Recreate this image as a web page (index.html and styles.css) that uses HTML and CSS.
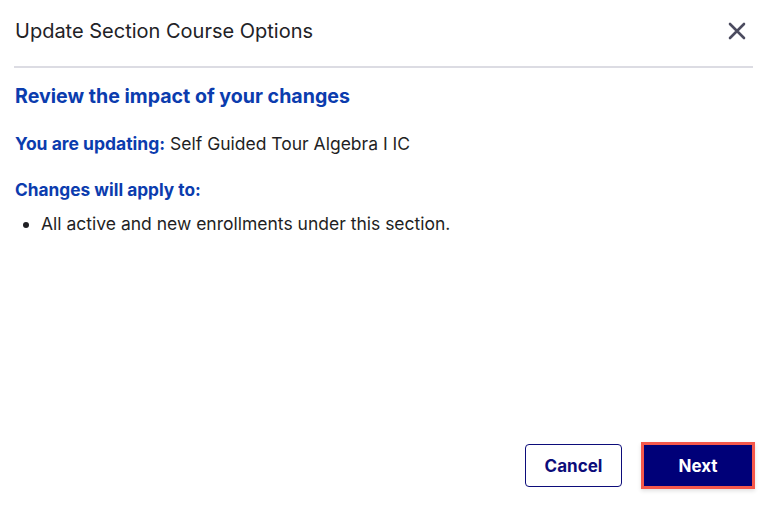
FILE: index.html
```html
<!DOCTYPE html>
<html lang="en">
<head>
<meta charset="utf-8">
<title>Update Section Course Options</title>
<link rel="stylesheet" href="styles.css">
</head>
<body>
<div class="dialog">
  <header class="dialog-header">
    <h1 class="dialog-title">Update Section Course Options</h1>
    <button class="close-btn" aria-label="Close">
      <svg width="18" height="18" viewBox="0 0 18 18"><path d="M2 2 L16 16 M16 2 L2 16" stroke="#4b4b5f" stroke-width="2.6" stroke-linecap="round"/></svg>
    </button>
  </header>
  <main class="dialog-body">
    <h2 class="review-heading">Review the impact of your changes</h2>
    <p class="updating"><span class="label">You are updating:</span> Self Guided Tour Algebra I IC</p>
    <h3 class="apply-heading">Changes will apply to:</h3>
    <ul class="apply-list">
      <li>All active and new enrollments under this section.</li>
    </ul>
  </main>
  <footer class="dialog-footer">
    <button class="btn btn-secondary">Cancel</button>
    <button class="btn btn-primary">Next</button>
  </footer>
</div>
</body>
</html>
```
FILE: styles.css
```css
html, body {
  margin: 0;
  padding: 0;
  height: 100%;
  background: #ffffff;
}
body {
  font-family: Inter, "Noto Sans", sans-serif;
  color: #1f1f24;
}
.dialog {
  height: 505px;
  display: flex;
  flex-direction: column;
  padding: 0 16px 0 14px;
  box-sizing: border-box;
}
.dialog-header {
  display: flex;
  align-items: center;
  justify-content: space-between;
  height: 66px;
  border-bottom: 2px solid #dcdce3;
  padding-left: 1px;
}
.dialog-title {
  margin: 0 0 4px;
  font-size: 20px;
  font-weight: 400;
  color: #222226;
}
.close-btn {
  background: none;
  border: 0;
  padding: 0;
  margin-right: 7px;
  margin-top: -4px;
  width: 18px;
  height: 18px;
  display: flex;
  cursor: pointer;
}
.dialog-body {
  flex: 1;
  padding-left: 1px;
}
.review-heading {
  margin: 16px 0 0;
  font-size: 19.6px;
  font-weight: 700;
  color: #0b3cae;
  line-height: 24px;
}
.updating {
  margin: 24px 0 0;
  font-size: 17.5px;
  line-height: 24px;
}
.label {
  font-weight: 700;
  color: #0b3cae;
}
.apply-heading {
  margin: 22px 0 0;
  font-size: 17.3px;
  font-weight: 700;
  color: #0b3cae;
  line-height: 24px;
}
.apply-list {
  margin: 10px 0 0;
  padding-left: 26px;
  font-size: 17.5px;
  line-height: 24px;
}
.dialog-footer {
  display: flex;
  justify-content: flex-end;
  align-items: center;
  gap: 19px;
  padding-bottom: 16px;
  margin-right: -2px;
}
.btn {
  font-family: Inter, "Noto Sans", sans-serif;
  font-size: 17px;
  font-weight: 700;
  border-radius: 4px;
  cursor: pointer;
}
.btn-secondary {
  width: 97px;
  height: 43px;
  background: #ffffff;
  color: #0c0c7a;
  border: 1px solid #0c0c7a;
}
.btn-primary {
  width: 114px;
  height: 47px;
  background: #000078;
  color: #ffffff;
  border: 3px solid #f5584b;
  border-radius: 0;
  box-shadow: 0 2px 4px rgba(0,0,0,0.12);
}
```
